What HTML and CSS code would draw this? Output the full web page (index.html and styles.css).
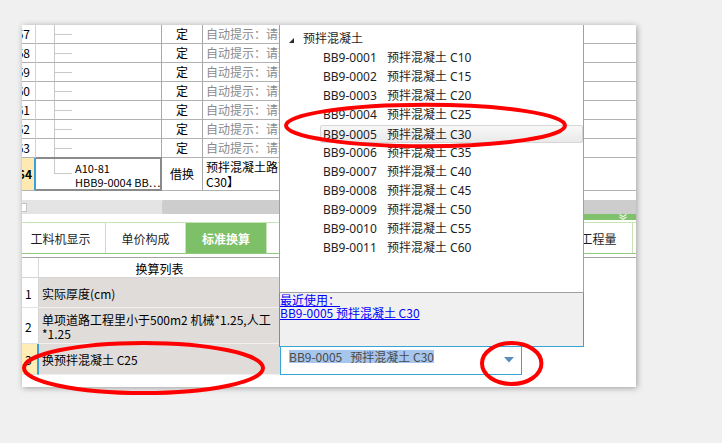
FILE: index.html
```html
<!DOCTYPE html>
<html>
<head>
<meta charset="utf-8">
<title>标准换算</title>
<link rel="stylesheet" href="styles.css">
</head>
<body>
<div class="win">
  <div class="grid">
    <div class="row"><div class="num">57</div><div class="c2 tree"></div><div class="c3">定</div><div class="c4 hint">自动提示：请输入清单简称</div></div>
    <div class="row"><div class="num">58</div><div class="c2 tree"></div><div class="c3">定</div><div class="c4 hint">自动提示：请输入清单简称</div></div>
    <div class="row"><div class="num">59</div><div class="c2 tree"></div><div class="c3">定</div><div class="c4 hint">自动提示：请输入清单简称</div></div>
    <div class="row"><div class="num">60</div><div class="c2 tree"></div><div class="c3">定</div><div class="c4 hint">自动提示：请输入清单简称</div></div>
    <div class="row"><div class="num">61</div><div class="c2 tree"></div><div class="c3">定</div><div class="c4 hint">自动提示：请输入清单简称</div></div>
    <div class="row"><div class="num">62</div><div class="c2 tree"></div><div class="c3">定</div><div class="c4 hint">自动提示：请输入清单简称</div></div>
    <div class="row"><div class="num">63</div><div class="c2 tree"></div><div class="c3">定</div><div class="c4 hint">自动提示：请输入清单简称</div></div>
    <div class="row tall">
      <div class="num cur">64</div>
      <div class="c2 tree-last sel"><div class="code">A10-81<br>HBB9-0004 BB…</div></div>
      <div class="c3">借换</div>
      <div class="c4 name">预拌混凝土路面<br>C30】</div>
    </div>
  </div>
  <div class="gap"></div>
  <div class="hscroll"><span class="grip"></span><span class="thumb"></span></div>
  <div class="splitter">
    <div class="sbar">
      <svg class="chev" width="10" height="6" viewBox="0 0 10 6"><polyline points="1.5,0.5 5,2.8 8.5,0.5"/><polyline points="1.5,3 5,5.3 8.5,3"/></svg>
    </div>
  </div>
  <div class="tabs">
    <div class="tab t1">工料机显示</div>
    <div class="tab t2">单价构成</div>
    <div class="tab active">标准换算</div>
    <div class="tab t4">换算信息</div>
    <div class="tabfill"></div>
    <div class="tab tlast">工程量</div>
  </div>
  <div class="after-tabs"></div>
  <div class="sub">
    <div class="srow head"><div class="snum"></div><div class="scell">换算列表</div><div class="scell2"></div></div>
    <div class="srow r1"><div class="snum">1</div><div class="scell">实际厚度(cm)</div><div class="scell2"></div></div>
    <div class="srow r2"><div class="snum">2</div><div class="scell">单项道路工程里小于500m2 机械*1.25,人工<br>*1.25</div><div class="scell2"></div></div>
    <div class="srow r3"><div class="snum cur">3</div><div class="scell">换预拌混凝土 C25</div><div class="scell2"></div></div>
  </div>

  <div class="popup">
    <div class="ptree">
      <div class="phead"><svg class="expander" width="5" height="5" viewBox="0 0 5 5"><polygon points="5,0 5,5 0,5"/></svg><span>预拌混凝土</span></div>
      <div class="pitem"><span class="pcode">BB9-0001</span>预拌混凝土 C10</div>
      <div class="pitem"><span class="pcode">BB9-0002</span>预拌混凝土 C15</div>
      <div class="pitem"><span class="pcode">BB9-0003</span>预拌混凝土 C20</div>
      <div class="pitem"><span class="pcode">BB9-0004</span>预拌混凝土 C25</div>
      <div class="pitem hot"><span class="pcode">BB9-0005</span>预拌混凝土 C30</div>
      <div class="pitem"><span class="pcode">BB9-0006</span>预拌混凝土 C35</div>
      <div class="pitem"><span class="pcode">BB9-0007</span>预拌混凝土 C40</div>
      <div class="pitem"><span class="pcode">BB9-0008</span>预拌混凝土 C45</div>
      <div class="pitem"><span class="pcode">BB9-0009</span>预拌混凝土 C50</div>
      <div class="pitem"><span class="pcode">BB9-0010</span>预拌混凝土 C55</div>
      <div class="pitem"><span class="pcode">BB9-0011</span>预拌混凝土 C60</div>
    </div>
    <div class="precent">
      <a class="link">最近使用：</a><br>
      <a class="link">BB9-0005 预拌混凝土 C30</a>
    </div>
    <div class="combo">
      <span class="ctext">BB9-0005   预拌混凝土 C30</span>
      <svg class="arrow" width="10" height="6" viewBox="0 0 10 6"><polygon points="0,0 10,0 5,5.5"/></svg>
    </div>
  </div>
</div>

<svg class="marks" width="722" height="443" viewBox="0 0 722 443">
  <ellipse cx="425.5" cy="125.5" rx="139.5" ry="20.7"/>
  <ellipse cx="143.5" cy="368" rx="119.5" ry="25"/>
  <ellipse cx="511.7" cy="363.5" rx="29.7" ry="20.5"/>
</svg>
</body>
</html>
```

FILE: styles.css
```css
html, body {
  margin: 0;
}
body {
  width: 722px;
  height: 443px;
  overflow: hidden;
  position: relative;
  box-sizing: border-box;
  padding: 25px 0 0 22px;
  background: #f0f0f0;
  font: 12px "Noto Sans CJK SC", sans-serif;
  color: #000;
}

.win {
  position: relative;
  width: 614px;
  height: 362px;
  background: #fff;
  box-shadow: 1px 1px 6px rgba(0, 0, 0, 0.35);
  display: flex;
  flex-direction: column;
}

/* ---------- top grid ---------- */
.grid {
  display: flex;
  flex-direction: column;
}
.row {
  display: flex;
  height: 19px;
}
.row.tall {
  height: 33px;
}
.row > div {
  box-sizing: border-box;
  border-bottom: 1px solid #b2b2b2;
  line-height: 18px;
  white-space: nowrap;
  overflow: hidden;
}
.num {
  width: 14px;
  flex: none;
  border-right: 1px solid #d2d2d2;
  display: flex;
  justify-content: flex-end;
  padding-right: 5px;
}
.num.cur {
  background: #ffe9b2;
  border-right: 2px solid #3aa0d8;
  font-weight: bold;
  line-height: 32px;
  padding-right: 2px;
}
.c2 {
  width: 126px;
  flex: none;
  border-right: 1px solid #a8a8a8;
}
.c3 {
  width: 41px;
  flex: none;
  border-right: 1px solid #a8a8a8;
  text-align: center;
}
.c4 {
  flex: 1;
  padding-left: 3px;
}
.hint {
  color: #8a8a8a;
}
.tree {
  background:
    linear-gradient(#c9c9c9, #c9c9c9) 18px 0 / 1px 100% no-repeat,
    linear-gradient(#c9c9c9, #c9c9c9) 18px 9px / 18px 1px no-repeat;
}
.tree-last {
  background:
    linear-gradient(#c9c9c9, #c9c9c9) 18px 0 / 1px 15px no-repeat,
    linear-gradient(#c9c9c9, #c9c9c9) 18px 15px / 18px 1px no-repeat;
}
.row > .sel {
  position: relative;
  overflow: visible;
}
.sel::after {
  content: "";
  position: absolute;
  left: 0;
  right: -1px;
  top: -1px;
  bottom: -1px;
  border: 2px solid #8a8a8a;
  border-left: none;
}
.code {
  padding: 3px 0 0 39px;
  font-size: 11px;
  line-height: 14px;
  overflow: hidden;
  white-space: nowrap;
}
.row.tall .c3 {
  line-height: 32px;
}
.row.tall .name {
  line-height: 15px;
  padding-top: 1px;
}

/* ---------- scrollbar / splitter ---------- */
.gap {
  height: 9px;
  flex: none;
}
.hscroll {
  height: 14px;
  flex: none;
  display: flex;
  background: #e4e4e4;
}
.grip {
  box-sizing: border-box;
  width: 5px;
  height: 9px;
  margin-top: 3px;
  background: #fff;
  border: 1px solid #c4c4c4;
  border-left: none;
}
.thumb {
  flex: 1;
  margin-left: 135px;
  background: #cdcdcd;
  border-radius: 2px 0 0 2px;
}
.splitter {
  height: 8px;
  flex: none;
}
.sbar {
  height: 6px;
  margin-left: 300px;
  background: #80c26c;
  display: flex;
  justify-content: flex-end;
  padding-right: 8px;
}
.chev polyline {
  fill: none;
  stroke: #e9f6e2;
  stroke-width: 1.2;
}

/* ---------- tabs ---------- */
.tabs {
  height: 32px;
  flex: none;
  box-sizing: border-box;
  display: flex;
  border-top: 1px solid #c6e4b6;
  border-bottom: 1px solid #90ca7e;
}
.tab {
  box-sizing: border-box;
  flex: none;
  border-right: 1px solid #c6e4b6;
  text-align: center;
  padding-top: 3px;
  line-height: 26px;
  font-size: 12px;
  color: #1e1e1e;
}
.t1 { width: 84px; padding-right: 6px; }
.t2 { width: 80px; }
.active {
  width: 81px;
  background: #7dc068;
  color: #fff;
  font-weight: bold;
}
.t4 { width: 80px; }
.tabfill { flex: 1; }
.tlast {
  width: 69px;
  margin-right: 3px;
  border-left: 1px solid #c6e4b6;
}
.after-tabs {
  height: 3px;
  flex: none;
}

/* ---------- lower table ---------- */
.sub {
  border-top: 1px solid #a2a2a2;
  display: flex;
  flex-direction: column;
}
.srow {
  display: flex;
}
.srow > div {
  box-sizing: border-box;
}
.snum {
  width: 17px;
  flex: none;
  border-right: 1px solid #d8d8d8;
  border-bottom: 1px solid #e2e2e2;
  padding-left: 3px;
}
.snum.cur {
  background: #ffedb5;
  border-right: 2px solid #3aa0d8;
}
.scell {
  width: 241px;
  flex: none;
  background: #e0dcd9;
  border-bottom: 1px solid #f3f1ef;
  padding-left: 3px;
  white-space: nowrap;
}
.scell2 {
  flex: 1;
  background: #fff;
}
.head { height: 20px; }
.head .scell {
  background: #fff;
  text-align: center;
  line-height: 21px;
  border-bottom: 1px solid #d4d4d4;
  padding-left: 0;
}
.head .snum { border-bottom: 1px solid #d4d4d4; }
.r1 { height: 30px; }
.r1 > .snum, .r1 > .scell { line-height: 31px; }
.r2 { height: 36px; }
.r2 > .snum { line-height: 37px; }
.r2 > .scell { line-height: 14px; padding-top: 5px; }
.r3 { height: 31px; }
.r3 > .snum, .r3 > .scell { line-height: 32px; }

/* ---------- dropdown popup ---------- */
.popup {
  position: absolute;
  left: 257px;
  top: 0;
  width: 305px;
  z-index: 2;
}
.ptree {
  box-sizing: border-box;
  height: 268px;
  background: #fff;
  border: 1px solid #a0a0a0;
  border-top: none;
  padding-top: 4px;
  font-family: "Noto Sans", "Noto Sans CJK SC", sans-serif;
  color: #1e1e1e;
}
.phead {
  height: 19px;
  line-height: 19px;
  display: flex;
  align-items: center;
  padding-left: 9px;
}
.expander {
  margin: 3px 9px 0 0;
}
.expander polygon {
  fill: #2b2b2b;
}
.pitem {
  box-sizing: border-box;
  height: 19px;
  line-height: 19px;
  margin-left: 40px;
  padding-left: 3px;
  white-space: nowrap;
}
.pcode {
  display: inline-block;
  width: 64px;
}
.pitem.hot {
  border: 1px solid #d6d6d6;
  border-radius: 2px;
  background: linear-gradient(#f8f8f8, #e9e9e9);
  line-height: 17px;
  padding-left: 2px;
  margin-top: 1px;
  height: 18px;
}
.precent {
  box-sizing: border-box;
  height: 54px;
  background: #f0f0f0;
  border: 1px solid #37a4d6;
  border-top: none;
  padding-top: 0;
  line-height: 13px;
}
.link {
  color: #0000ff;
  text-decoration: underline;
  white-space: nowrap;
}
.combo {
  box-sizing: border-box;
  width: 242px;
  height: 28px;
  margin-left: 1px;
  background: #fff;
  border: 1px solid #37a4d6;
  border-top: none;
  display: flex;
  align-items: flex-start;
  padding: 3px 7px 0 8px;
}
.ctext {
  white-space: pre;
  background: #a6c6ee;
  color: #4a4a4a;
  line-height: 13px;
}
.arrow {
  margin: 7px 0 0 auto;
}
.arrow polygon {
  fill: #5a8dbd;
}

/* ---------- annotation ---------- */
.marks {
  position: absolute;
  left: 0;
  top: 0;
  z-index: 5;
  pointer-events: none;
}
.marks ellipse {
  fill: none;
  stroke: #ff0000;
  stroke-width: 4;
}
```
